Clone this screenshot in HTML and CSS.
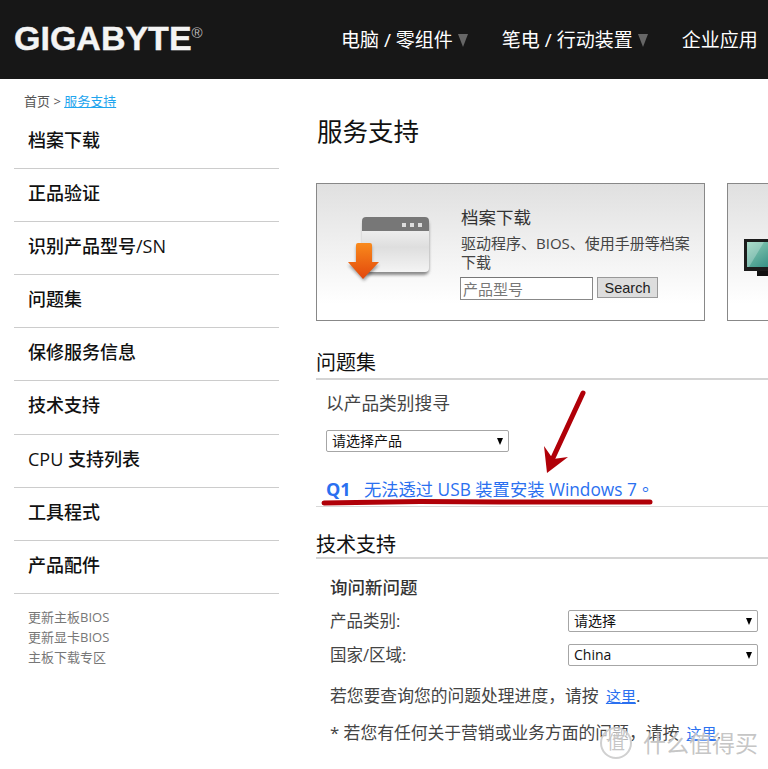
FILE: index.html
```html
<!DOCTYPE html>
<html lang="zh-CN">
<head>
<meta charset="utf-8">
<title>服务支持 - GIGABYTE</title>
<link rel="stylesheet" href="styles.css">
</head>
<body>
<header class="topbar">
  <div class="logo">GIGABYTE<sup class="reg">®</sup></div>
  <nav class="topnav">
    <a class="topnav-item">电脑 / 零组件<i class="caret"></i></a>
    <a class="topnav-item">笔电 / 行动装置<i class="caret"></i></a>
    <a class="topnav-item">企业应用</a>
  </nav>
</header>
<div class="page">
  <aside class="side">
    <div class="crumbs">首页 &gt; <a class="crumb-link">服务支持</a></div>
    <ul class="sidemenu">
      <li>档案下载</li>
      <li>正品验证</li>
      <li>识别产品型号/SN</li>
      <li>问题集</li>
      <li>保修服务信息</li>
      <li>技术支持</li>
      <li>CPU 支持列表</li>
      <li>工具程式</li>
      <li>产品配件</li>
    </ul>
    <div class="sidelinks">
      <a>更新主板BIOS</a>
      <a>更新显卡BIOS</a>
      <a>主板下载专区</a>
    </div>
  </aside>
  <main class="main">
    <h1 class="title">服务支持</h1>
    <div class="cards">
      <section class="card">
        <svg class="card-icon" viewBox="0 0 120 100" width="120" height="100">
          <defs>
            <linearGradient id="win" x1="0" y1="0" x2="0" y2="1">
              <stop offset="0" stop-color="#fafafa"/>
              <stop offset=".55" stop-color="#dedede"/>
              <stop offset="1" stop-color="#f4f4f4"/>
            </linearGradient>
            <linearGradient id="arr" x1="0" y1="0" x2="0" y2="1">
              <stop offset="0" stop-color="#f98a1c"/>
              <stop offset="1" stop-color="#e2470c"/>
            </linearGradient>
            <filter id="soft" x="-20%" y="-20%" width="140%" height="140%">
              <feGaussianBlur stdDeviation="1.6"/>
            </filter>
          </defs>
          <rect x="33" y="20" width="66" height="55" rx="5" fill="#333" opacity=".55" filter="url(#soft)"/>
          <rect x="32" y="17" width="67" height="55" rx="4" fill="url(#win)"/>
          <path d="M32 31V21a4 4 0 0 1 4-4h59a4 4 0 0 1 4 4v10z" fill="#777"/>
          <rect x="72" y="23" width="4" height="4" fill="#ddd"/>
          <rect x="80" y="23" width="4" height="4" fill="#ddd"/>
          <rect x="88" y="23" width="4" height="4" fill="#ddd"/>
          <path d="M26 46h16v19h7L34 81 18 65h8z" fill="#222" opacity=".4" filter="url(#soft)"/>
          <path d="M26 45a2 2 0 0 1 2-2h12a2 2 0 0 1 2 2v17h7L33 79 18 62h8z" fill="url(#arr)"/>
        </svg>
        <div class="card-body">
          <h2 class="card-title">档案下载</h2>
          <p class="card-desc">驱动程序<span class="tc">、</span>BIOS<span class="tc">、</span>使用手册等档案下载</p>
          <form class="search">
            <input class="search-input" type="text" placeholder="产品型号">
            <button class="search-btn" type="button">Search</button>
          </form>
        </div>
      </section>
      <section class="card card-next">
        <svg class="monitor" viewBox="0 0 40 44" width="40" height="44">
          <defs>
            <linearGradient id="scr" x1="0" y1="0" x2="1" y2="1">
              <stop offset="0" stop-color="#8fd0b8"/>
              <stop offset="1" stop-color="#1f7f78"/>
            </linearGradient>
          </defs>
          <rect x="0" y="0" width="40" height="32" fill="#1c1c1c"/>
          <rect x="3" y="3" width="37" height="25" fill="url(#scr)"/>
          <path d="M3 28V3h17L5 28z" fill="#fff" opacity=".25"/>
          <rect x="13" y="32" width="27" height="5" fill="#111"/>
        </svg>
      </section>
    </div>

    <h2 class="sec-head sec-faq">问题集</h2>
    <div class="faq">
      <h3 class="faq-label">以产品类别搜寻</h3>
      <span class="sel sel-product"><select><option>请选择产品</option></select></span>
      <a class="faq-q"><b class="q-num">Q1</b>无法透过 USB 装置安装 Windows 7<span class="tc">。</span></a>
    </div>

    <h2 class="sec-head sec-tech">技术支持</h2>
    <div class="ask">
      <h3 class="ask-title">询问新问题</h3>
      <div class="ask-row ask-row-first">
        <label class="ask-label">产品类别:</label>
        <span class="sel"><select><option>请选择</option></select></span>
      </div>
      <div class="ask-row">
        <label class="ask-label">国家/区域:</label>
        <span class="sel"><select><option>China</option></select></span>
      </div>
      <p class="note note-first">若您要查询您的问题处理进度<span class="tc">，</span>请按 <a class="here">这里</a>.</p>
      <p class="note">* 若您有任何关于营销或业务方面的问题<span class="tc">，</span>请按 <a class="here">这里</a>.</p>
    </div>
  </main>
</div>

<svg class="annotation" viewBox="0 0 768 769" width="768" height="769" aria-hidden="true">
  <path d="M583 393 552 460" stroke="#b00008" stroke-width="5" stroke-linecap="round" fill="none"/>
  <path d="M544 446 547 473 568 457 553 459z" fill="#b00008"/>
  <path d="M324 503 420 501.5 500 502 650 502" stroke="#b00008" stroke-width="5" stroke-linecap="round" fill="none"/>
</svg>

<div class="watermark">
  <span class="wm-badge">值</span>
  <span class="wm-text">什么值得买</span>
</div>
</body>
</html>
```

FILE: styles.css
```css
* { box-sizing: border-box; }
html, body { margin: 0; padding: 0; }
body {
  position: relative;
  width: 768px;
  height: 769px;
  overflow: hidden;
  background: #fff;
  color: #333;
  font-family: "Open Sans", "Noto Sans CJK SC", sans-serif;
}
.tc { font-family: "Noto Sans CJK TC", sans-serif; }
.topbar {
  height: 79px;
  background: #171717;
  display: flex;
  align-items: center;
  padding-left: 14px;
  overflow: hidden;
}
.logo {
  width: 327px;
  flex: none;
  color: #f4f4f4;
  font: bold 34px/1 "Liberation Sans", sans-serif;
  margin-top: -4px;
  -webkit-text-stroke: .4px #f4f4f4;
}
.reg {
  font-size: 15px;
  font-weight: normal;
  vertical-align: 12px;
  line-height: 0;
  color: #bbb;
  -webkit-text-stroke: 0;
}
.topnav { display: flex; gap: 34px; white-space: nowrap; }
.topnav-item {
  display: flex;
  align-items: center;
  color: #fff;
  font-size: 19px;
  line-height: 26px;
}
.caret {
  width: 0;
  height: 0;
  margin-left: 5px;
  margin-top: 2px;
  border-left: 5px solid transparent;
  border-right: 5px solid transparent;
  border-top: 13px solid #666;
}
.page { display: flex; }
.side { width: 265px; margin-left: 14px; flex: none; }
.crumbs {
  height: 36.8px;
  padding: 14px 0 0 10px;
  font-size: 13px;
  line-height: 17px;
  color: #555;
}
.crumb-link { color: #1fa5ee; text-decoration: underline; }
.sidemenu { list-style: none; margin: 0; padding: 0; }
.sidemenu li {
  height: 53.125px;
  padding-left: 14px;
  border-bottom: 1px solid #ccc;
  font-size: 18px;
  font-weight: 500;
  line-height: 48px;
  color: #111;
}
.sidelinks { display: flex; flex-direction: column; padding: 13px 0 0 14px; }
.sidelinks a { font-size: 13px; line-height: 20px; color: #777; }
.main { margin-left: 37px; width: 452px; flex: none; min-width: 0; }
.title {
  margin: 0 0 0 1px;
  padding-top: 32px;
  height: 104px;
  font-size: 25.5px;
  line-height: 40px;
  font-weight: normal;
  color: #111;
}
.cards { display: flex; gap: 22px; }
.card {
  flex: none;
  width: 389px;
  height: 138px;
  border: 1px solid #888;
  background: linear-gradient(#e0e0e0, #fff 88%);
  display: flex;
}
.card-icon { flex: none; margin: 16px 0 0 13px; }
.card-body { width: 240px; margin-left: 11px; padding-top: 21px; }
.card-title { margin: 0; font-size: 17.5px; line-height: 24px; font-weight: normal; color: #333; }
.card-desc { margin: 5px 0 0; font-size: 15px; line-height: 18.5px; color: #444; }
.search { display: flex; align-items: flex-start; gap: 4px; margin-top: 6px; margin-left: -1px; }
.search-input {
  width: 133px;
  height: 23px;
  padding: 0 2px;
  border: 1px solid #888;
  border-top-color: #777;
  background: #fff;
  font: 15px/20px "Noto Sans CJK SC", sans-serif;
}
.search-input::placeholder { color: #777; }
.search-btn {
  width: 61px;
  height: 21px;
  padding: 0;
  border: 1px solid #999;
  background: #ddd;
  color: #222;
  font: 14.5px/18px "Liberation Sans", sans-serif;
}
.card-next { padding: 55px 0 0 16px; }
.monitor { flex: none; }
.sec-head {
  margin: 0;
  font-size: 20px;
  font-weight: normal;
  color: #111;
  border-bottom: 2px solid #d4d4d4;
}
.sec-faq { height: 59px; padding-top: 28px; line-height: 28px; }
.faq { height: 127px; border-bottom: 1px solid #d8d8d8; padding: 10px 0 0 10px; }
.faq-label { margin: 0; font-size: 17.7px; line-height: 26px; font-weight: normal; color: #444; }
.sel { display: block; position: relative; width: 190px; height: 22px; }
.sel::after {
  content: "";
  position: absolute;
  right: 6px;
  top: 8px;
  border-left: 3.5px solid transparent;
  border-right: 3.5px solid transparent;
  border-top: 7px solid #000;
}
.sel select {
  appearance: none;
  -webkit-appearance: none;
  display: block;
  width: 100%;
  height: 100%;
  padding: 0 0 0 5px;
  border: 1px solid #a6a6a6;
  border-radius: 2px;
  background: #fff;
  color: #111;
  font: 14px/20px "Open Sans", "Noto Sans CJK SC", sans-serif;
}
.sel-product { width: 183px; margin-top: 14px; }
.faq-q {
  display: block;
  margin-top: 25px;
  color: #2a70f0;
  font-size: 17.3px;
  line-height: 24px;
  white-space: nowrap;
}
.q-num {
  display: inline-block;
  width: 38px;
  font: bold 18px/24px "Open Sans", sans-serif;
}
.sec-tech { height: 52px; padding-top: 24px; line-height: 28px; }
.ask { padding: 16px 0 0 14px; }
.ask-title { margin: 0; font-size: 17.5px; line-height: 24px; font-weight: 500; color: #333; }
.ask-row { display: flex; align-items: center; justify-content: space-between; width: 428px; height: 34px; }
.ask-row-first { margin-top: 5px; }
.ask-label { font-size: 16.5px; line-height: 24px; color: #444; }
.note { margin: 0; font-size: 16.8px; line-height: 24px; color: #444; white-space: nowrap; }
.note-first { margin-top: 11px; }
.note + .note { margin-top: 12px; }
.here { margin-left: 3px; color: #2a70f0; font-size: 15px; text-decoration: underline; }
.annotation { position: absolute; left: 0; top: 0; pointer-events: none; }
.watermark {
  position: absolute;
  left: 600px;
  top: 727px;
  display: flex;
  align-items: center;
  gap: 11px;
  color: rgba(190, 190, 190, .9);
  white-space: nowrap;
  text-shadow: 0 0 2px #fff;
}
.wm-badge {
  width: 32px;
  height: 32px;
  border: 2px solid rgba(200, 200, 200, .85);
  border-radius: 50%;
  background: rgba(255, 255, 255, .6);
  font-size: 18px;
  line-height: 27px;
  text-align: center;
}
.wm-text { font-size: 23px; line-height: 30px; }
```
